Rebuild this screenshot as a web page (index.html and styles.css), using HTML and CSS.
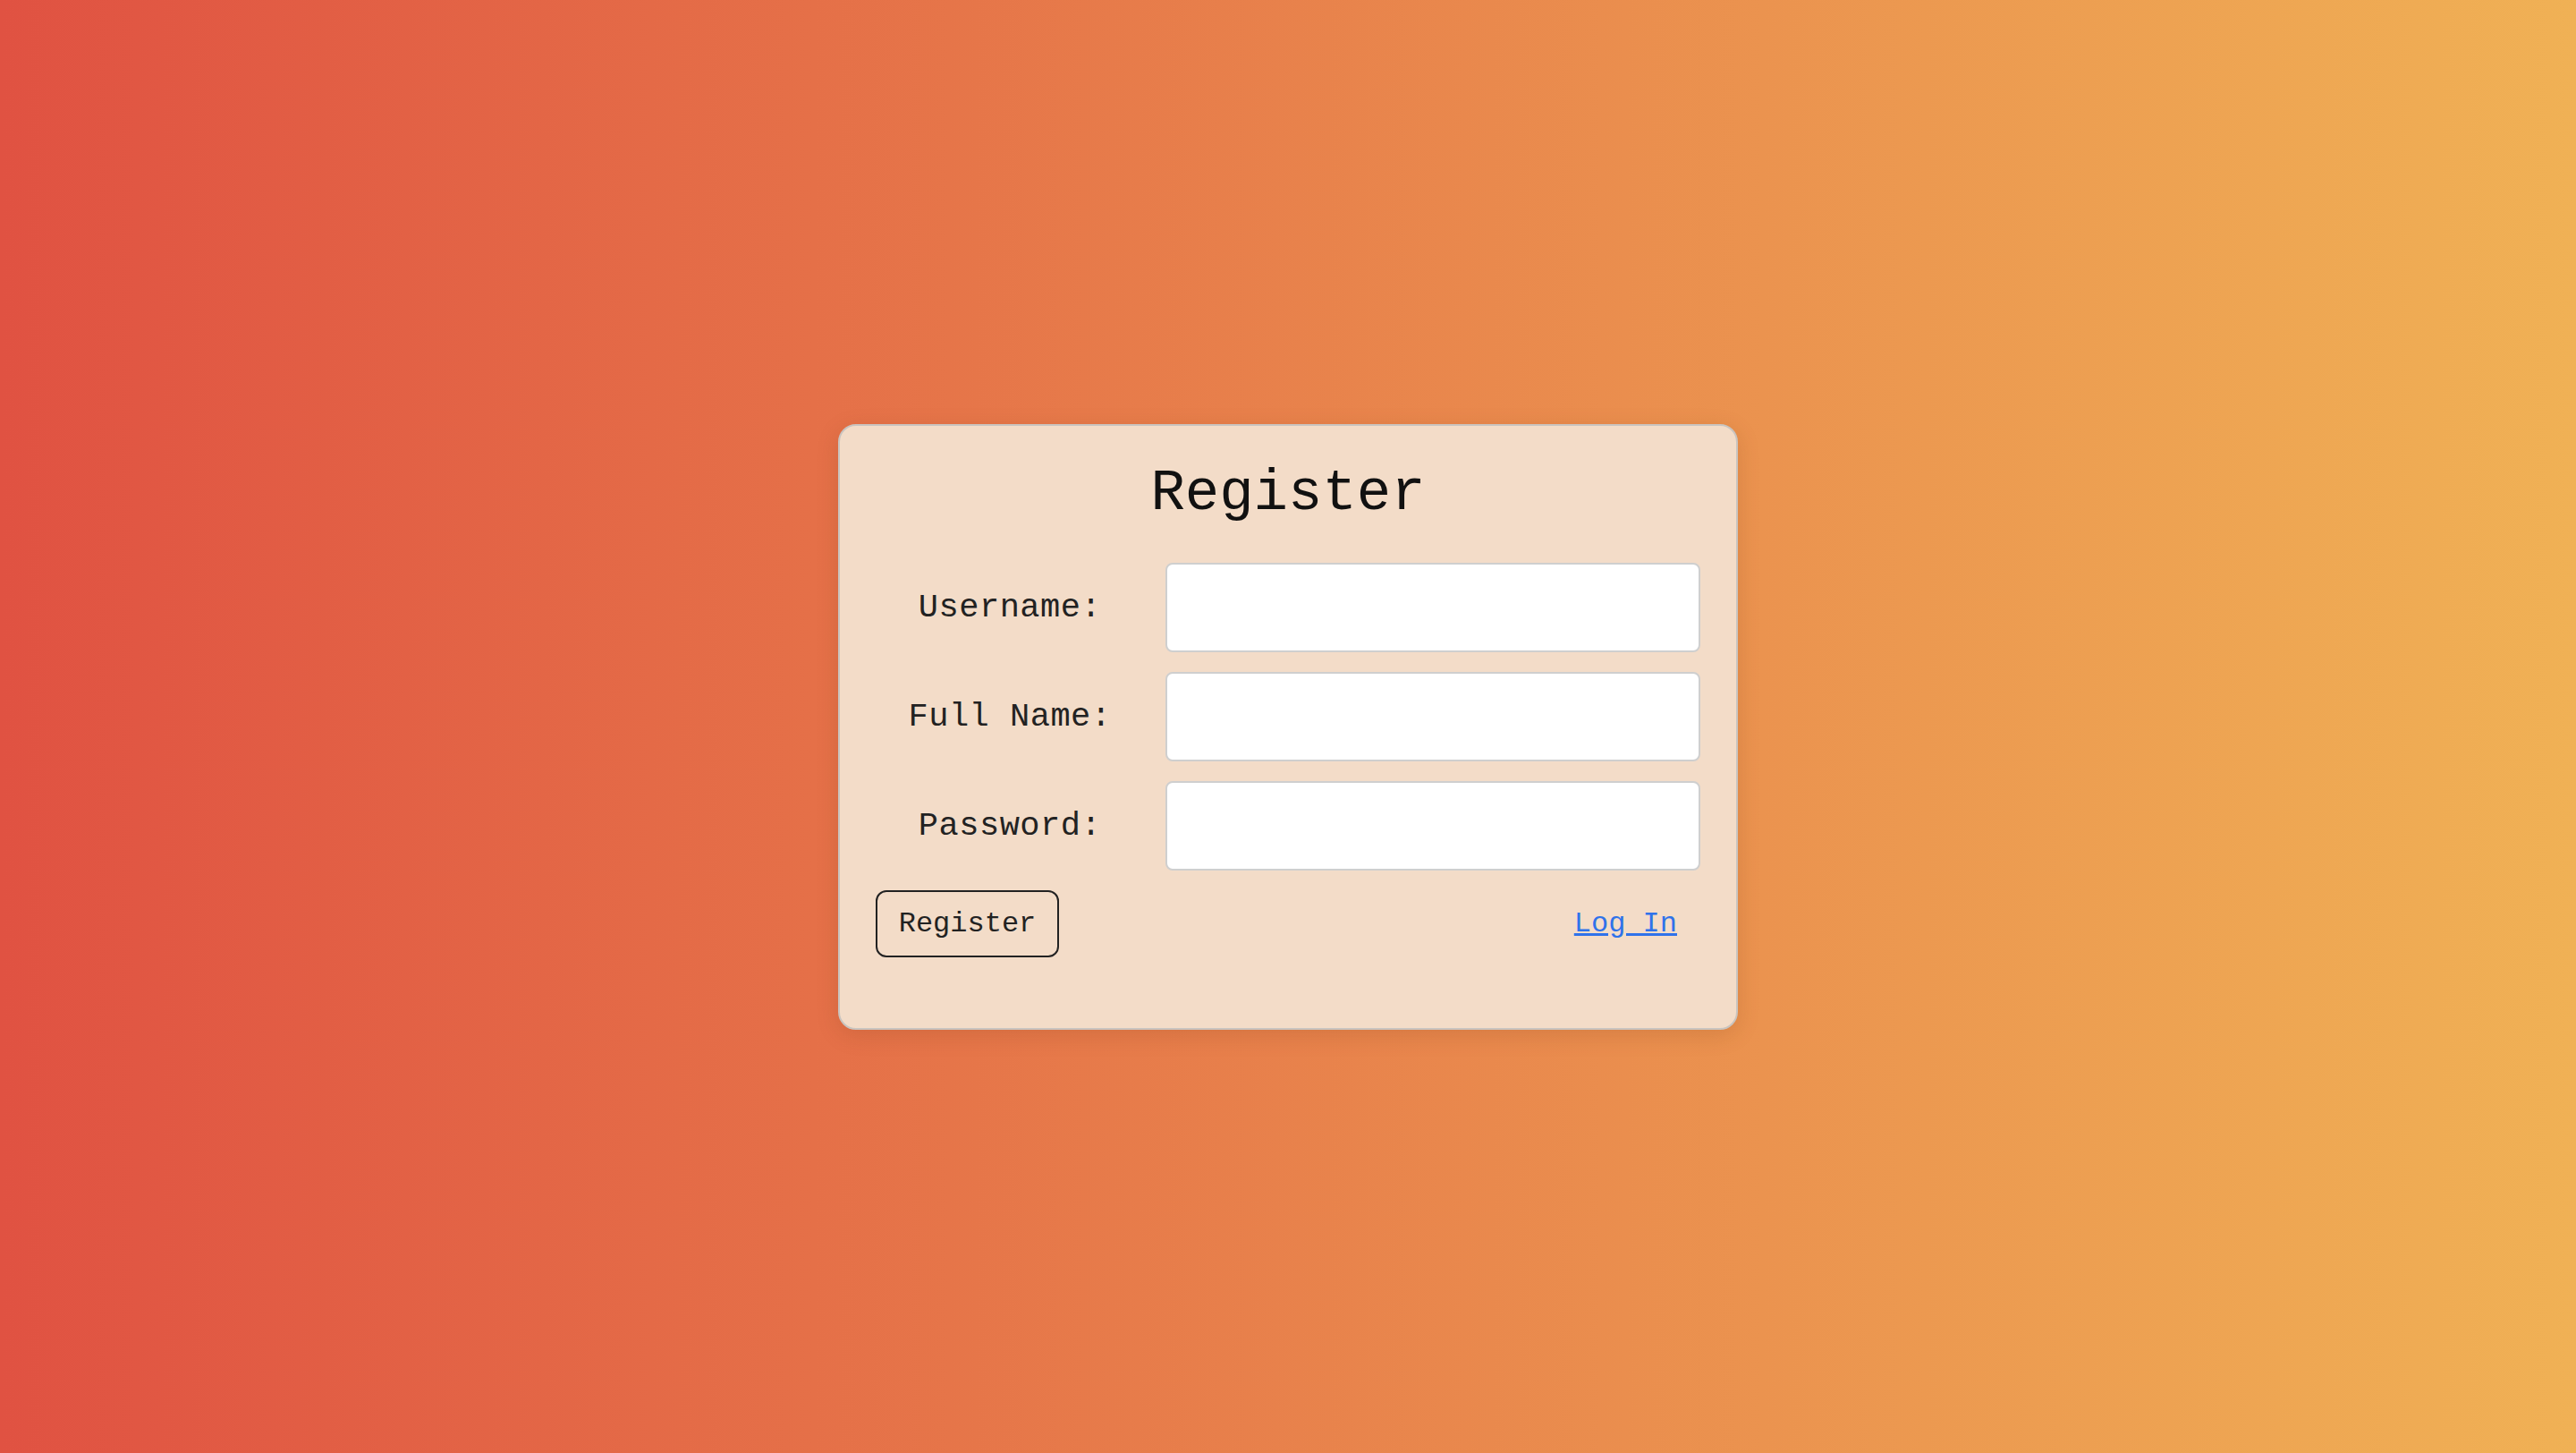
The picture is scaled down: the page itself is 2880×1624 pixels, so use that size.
FILE: index.html
```html
<!DOCTYPE html>
<html lang="en">
<head>
<meta charset="utf-8">
<title>Register</title>
<link rel="stylesheet" href="styles.css">
</head>
<body>
<main class="page">
  <section class="card">
    <h1 class="title">Register</h1>
    <form class="form">
      <div class="row">
        <label class="label" for="username">Username:</label>
        <input class="field" id="username" type="text">
      </div>
      <div class="row">
        <label class="label" for="fullname">Full Name:</label>
        <input class="field" id="fullname" type="text">
      </div>
      <div class="row">
        <label class="label" for="password">Password:</label>
        <input class="field" id="password" type="password">
      </div>
      <div class="actions">
        <button class="btn" type="button">Register</button>
        <a class="link" href="#">Log In</a>
      </div>
    </form>
  </section>
</main>
</body>
</html>
```

FILE: styles.css
```css
html, body {
  margin: 0;
  padding: 0;
  height: 100%;
}
body {
  font-family: Courier, "Nimbus Mono PS", "FreeMono", "Courier New", "Liberation Mono", monospace;
  background: linear-gradient(to right, #e05242, #f0b155);
  color: #222;
}
.page {
  height: 100%;
  display: flex;
  align-items: center;
  justify-content: center;
}
.card {
  box-sizing: border-box;
  width: 1006px;
  height: 677px;
  padding: 40px;
  background: #f3dcc8;
  border: 2px solid #c9c4bf;
  border-radius: 20px;
  box-shadow: 0 6px 24px rgba(120, 60, 20, 0.18);
}
.title {
  margin: 0 0 40px;
  font-size: 64px;
  font-weight: normal;
  line-height: 73px;
  text-align: center;
  color: #111;
}
.form {
  display: flex;
  flex-direction: column;
  gap: 22px;
}
.row {
  display: grid;
  grid-template-columns: 300px 1fr;
  column-gap: 24px;
  align-items: center;
}
.label {
  text-align: center;
  font-size: 37px;
  letter-spacing: 0.5px;
  color: #222;
}
.field {
  box-sizing: border-box;
  height: 100px;
  width: 100%;
  background: #fff;
  border: 2px solid #cfcfcf;
  border-radius: 8px;
  padding: 0 16px;
  font-family: inherit;
  font-size: 32px;
}
.actions {
  display: flex;
  align-items: center;
  justify-content: space-between;
}
.btn {
  box-sizing: border-box;
  width: 205px;
  height: 75px;
  background: transparent;
  border: 2px solid #222;
  border-radius: 12px;
  font-family: inherit;
  font-size: 32px;
  color: #222;
  padding: 0;
}
.link {
  font-size: 32px;
  color: #2f72ea;
  text-decoration: underline;
  margin-right: 26px;
}
```
